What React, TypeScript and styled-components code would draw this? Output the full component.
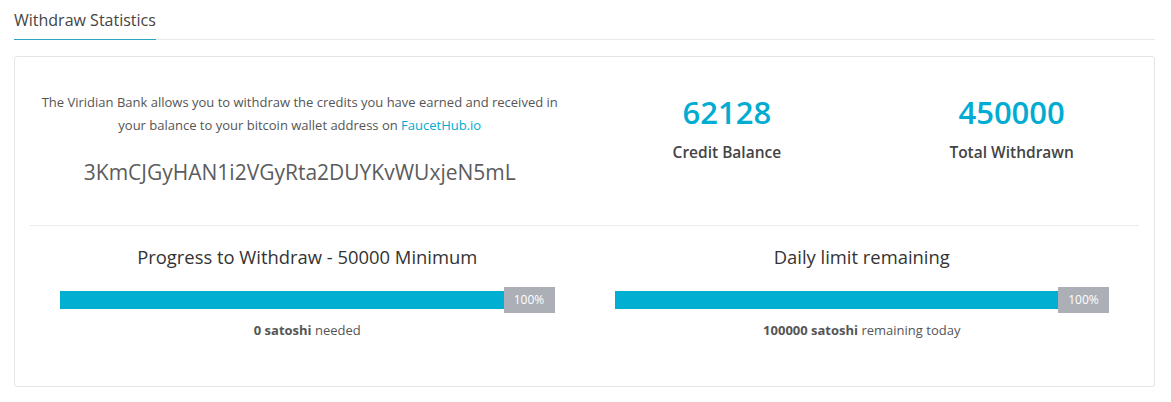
import React from 'react';
import styled, { createGlobalStyle } from 'styled-components';

const GlobalStyle = createGlobalStyle`
  body {
    margin: 0;
    background: #fff;
    font-family: "Open Sans", "Liberation Sans", sans-serif;
    color: #555;
  }
`;

/** Style */

const Page = styled.div`
  padding: 0 16px 0 14px;
`;

const TabBar = styled.div`
  display: flex;
  border-bottom: 1px solid #e9e9e9;
`;

const Tab = styled.div`
  font-size: 16px;
  line-height: 22px;
  padding: 9px 0 8px;
  color: #444;
  white-space: nowrap;
  border-bottom: 1px solid #27a7c0;
  margin-bottom: -1px;
`;

const Card = styled.div`
  margin-top: 16px;
  border: 1px solid #e4e4e4;
  border-radius: 3px;
  padding: 0 15px;
  box-shadow: 0 1px 1px rgba(0, 0, 0, 0.03);
`;

const TopRow = styled.div`
  display: grid;
  grid-template-columns: 1fr 1fr;
  padding: 34px 0 38px;
  border-bottom: 1px solid #ececec;
`;

const Intro = styled.div`
  text-align: center;
  margin-right: 15px;
`;

const Paragraph = styled.p`
  margin: 0;
  font-size: 13px;
  line-height: 23px;
  color: #555;
`;

const Link = styled.a`
  color: #00acd2;
  text-decoration: none;
`;

const Address = styled.div`
  margin-top: 20px;
  font-size: 21px;
  line-height: 30px;
  color: #5c5c5c;
`;

const Stats = styled.div`
  display: grid;
  grid-template-columns: 1fr 1fr;
  margin-right: -15px;
`;

const Stat = styled.div`
  text-align: center;
`;

const StatValue = styled.div`
  font-size: 31px;
  font-weight: 600;
  line-height: 40px;
  margin-top: 1px;
  color: #00acd2;
`;

const StatLabel = styled.div`
  margin-top: 8px;
  font-size: 15.5px;
  font-weight: 600;
  line-height: 24px;
  color: #444;
`;

const BottomRow = styled.div`
  display: grid;
  grid-template-columns: 1fr 1fr;
  padding: 18px 0 45px;
`;

const Meter = styled.div`
  padding: 0 30px;
  text-align: center;
`;

const MeterTitle = styled.div`
  font-size: 18.4px;
  line-height: 26px;
  color: #333;
`;

const Track = styled.div`
  margin-top: 17px;
  display: flex;
  align-items: center;
  height: 26px;
`;

const Fill = styled.div`
  flex: 1;
  height: 18px;
  background: #00afd1;
`;

const Percent = styled.div`
  width: 51px;
  height: 26px;
  line-height: 26px;
  background: #acb0b6;
  color: #fff;
  font-size: 12px;
  text-align: center;
`;

const Note = styled.div`
  margin-top: 6px;
  font-size: 13px;
  line-height: 22px;
  color: #555;

  b {
    font-weight: 700;
    color: #555;
  }
`;

/** End */

const meters = [
  { title: 'Progress to Withdraw - 50000 Minimum', amount: '0 satoshi', rest: 'needed', pct: 100 },
  { title: 'Daily limit remaining', amount: '100000 satoshi', rest: 'remaining today', pct: 100 },
];

export default function App() {
  return (
    <Page>
      <GlobalStyle />
      <TabBar>
        <Tab>Withdraw Statistics</Tab>
      </TabBar>
      <Card>
        <TopRow>
          <Intro>
            <Paragraph>
              The Viridian Bank allows you to withdraw the credits you have earned and received in
              <br />
              your balance to your bitcoin wallet address on <Link href="#">FaucetHub.io</Link>
            </Paragraph>
            <Address>3KmCJGyHAN1i2VGyRta2DUYKvWUxjeN5mL</Address>
          </Intro>
          <Stats>
            <Stat>
              <StatValue>62128</StatValue>
              <StatLabel>Credit Balance</StatLabel>
            </Stat>
            <Stat>
              <StatValue>450000</StatValue>
              <StatLabel>Total Withdrawn</StatLabel>
            </Stat>
          </Stats>
        </TopRow>
        <BottomRow>
          {meters.map((m) => (
            <Meter key={m.title}>
              <MeterTitle>{m.title}</MeterTitle>
              <Track>
                <Fill />
                <Percent>{m.pct}%</Percent>
              </Track>
              <Note>
                <b>{m.amount}</b> {m.rest}
              </Note>
            </Meter>
          ))}
        </BottomRow>
      </Card>
    </Page>
  );
}
